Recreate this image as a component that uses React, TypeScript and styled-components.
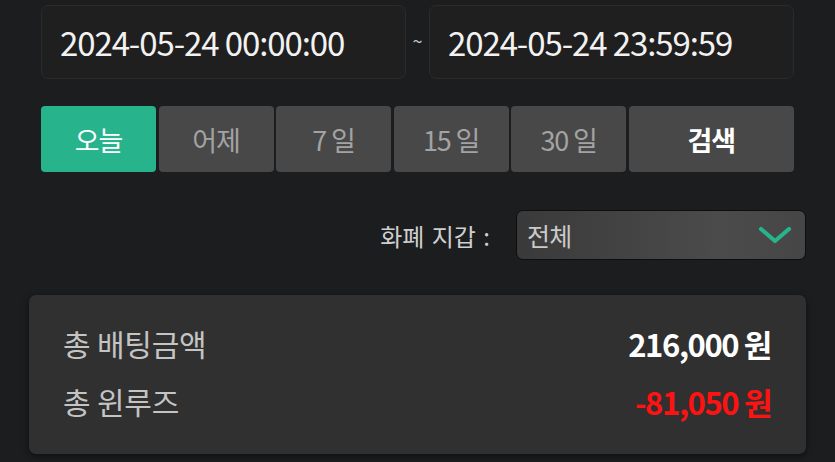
import React from "react";
import styled, { createGlobalStyle } from "styled-components";

const Global = createGlobalStyle`
  html, body { margin: 0; padding: 0; background: #1b1d1f; }
  body { font-family: "Noto Sans CJK KR", "Noto Sans", sans-serif; }
  * { box-sizing: border-box; }
`;

const Page = styled.div`
  width: 835px;
  height: 462px;
  overflow: hidden;
  background: #1b1d1f;
  padding-top: 5px;
`;

const DateRow = styled.div`
  display: flex;
  align-items: center;
  padding: 0 41px;
`;

const DateInput = styled.div`
  flex: 1;
  height: 74px;
  background: #1f1f1f;
  border: 1px solid #2b2b2b;
  border-radius: 7px;
  display: flex;
  align-items: center;
  padding-left: 18px;
  color: #f2f2f2;
  font-size: 33px;
  letter-spacing: -1.1px;
`;

const Tilde = styled.span`
  width: 23px;
  text-align: center;
  color: #c8c8c8;
  font-size: 18px;
  margin-top: -4px;
`;

const ButtonRow = styled.div`
  display: grid;
  grid-template-columns: repeat(5, 115px) 1fr;
  gap: 2.5px;
  padding: 0 41px;
  margin-top: 27px;
`;

const RangeButton = styled.button<{ $active?: boolean; $strong?: boolean }>`
  height: 66px;
  border: none;
  border-radius: 4px;
  background: ${(p) => (p.$active ? "#27b38c" : "#484848")};
  color: ${(p) => (p.$active || p.$strong ? "#ffffff" : "#a3a3a3")};
  font-family: "Noto Sans CJK KR", sans-serif;
  font-size: 27px;
  font-weight: ${(p) => (p.$strong ? 700 : 400)};
  letter-spacing: -1.2px;
  padding: 0;
  display: flex;
  align-items: center;
  justify-content: center;
`;

const FilterRow = styled.div`
  display: flex;
  justify-content: flex-end;
  align-items: center;
  gap: 26px;
  padding: 0 29px;
  margin-top: 38px;
`;

const FilterLabel = styled.span`
  color: #cfcfcf;
  font-size: 24px;
  letter-spacing: 0px;
  word-spacing: 2px;
`;

const Select = styled.div`
  width: 290px;
  height: 50px;
  border: 1.5px solid #0e0e0e;
  border-radius: 7px;
  background: linear-gradient(to right, #3a3a3a, #4b4b4b 70%, #464646);
  display: flex;
  align-items: center;
  justify-content: space-between;
  padding: 0 13px 0 10px;
  color: #cacaca;
  font-size: 25px;
  letter-spacing: -0.8px;
`;

const Card = styled.div`
  margin: 35px 29px 0;
  height: 159px;
  background: #303030;
  border-radius: 7px;
  box-shadow: 0 2px 6px rgba(0, 0, 0, 0.5);
  padding: 19px 35px 0 34px;
  display: flex;
  flex-direction: column;
`;

const SummaryRow = styled.div`
  display: flex;
  justify-content: space-between;
  align-items: center;
  height: 58px;
`;

const SummaryLabel = styled.span`
  color: #c4c4c4;
  font-size: 30px;
  letter-spacing: -0.2px;
`;

const SummaryValue = styled.span<{ $negative?: boolean }>`
  color: ${(p) => (p.$negative ? "#ff1212" : "#ffffff")};
  font-size: 31px;
  font-weight: 700;
  letter-spacing: -1.4px;
`;

const Chevron = () => (
  <svg width="34" height="18" viewBox="0 0 34 18">
    <path
      d="M3 3 L17 15 L31 3"
      fill="none"
      stroke="#27b38c"
      strokeWidth="4.2"
      strokeLinecap="round"
      strokeLinejoin="round"
    />
  </svg>
);

const ranges = ["오늘", "어제", "7 일", "15 일", "30 일"];

export default function App() {
  return (
    <>
      <Global />
      <Page>
        <DateRow>
          <DateInput>2024-05-24 00:00:00</DateInput>
          <Tilde>~</Tilde>
          <DateInput>2024-05-24 23:59:59</DateInput>
        </DateRow>
        <ButtonRow>
          {ranges.map((r, i) => (
            <RangeButton key={r} $active={i === 0}>
              {r}
            </RangeButton>
          ))}
          <RangeButton $strong>검색</RangeButton>
        </ButtonRow>
        <FilterRow>
          <FilterLabel>화폐 지갑 :</FilterLabel>
          <Select>
            <span>전체</span>
            <Chevron />
          </Select>
        </FilterRow>
        <Card>
          <SummaryRow>
            <SummaryLabel>총 배팅금액</SummaryLabel>
            <SummaryValue>216,000 원</SummaryValue>
          </SummaryRow>
          <SummaryRow>
            <SummaryLabel>총 윈루즈</SummaryLabel>
            <SummaryValue $negative>-81,050 원</SummaryValue>
          </SummaryRow>
        </Card>
      </Page>
    </>
  );
}
